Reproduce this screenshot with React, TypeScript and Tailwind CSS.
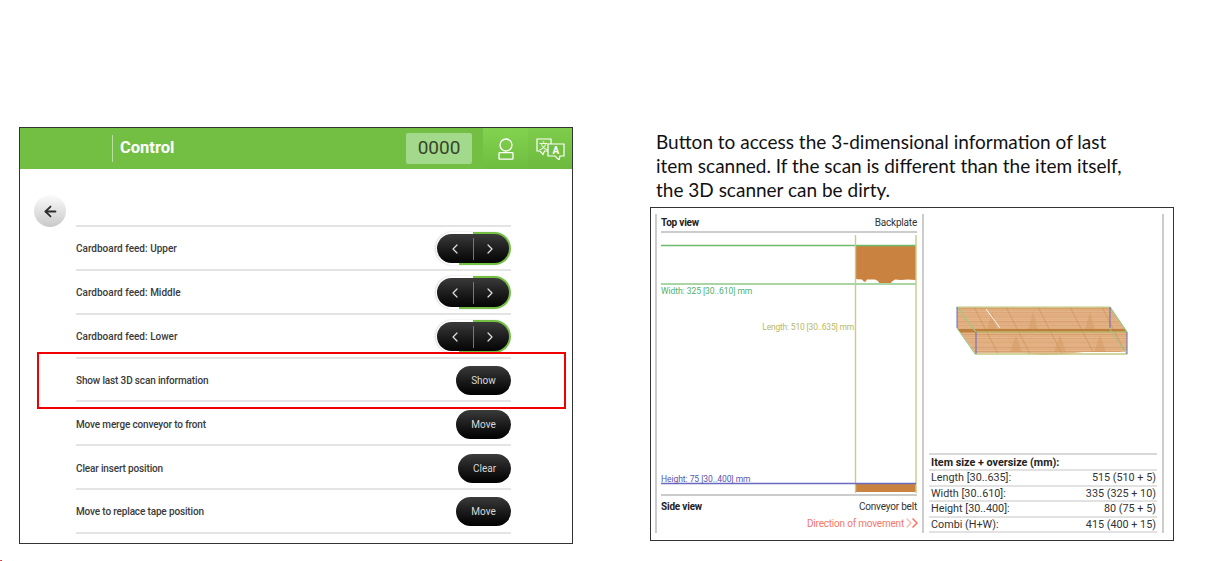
import { ArrowLeft, ChevronLeft, ChevronRight } from "lucide-react";

const actionRows = [
  { label: "Show last 3D scan information", action: "Show", width: "w-[55px]" },
  { label: "Move merge conveyor to front", action: "Move", width: "w-[55px]" },
  { label: "Clear insert position", action: "Clear", width: "w-[53px]" },
  { label: "Move to replace tape position", action: "Move", width: "w-[55px]" },
];

const sizeRows = [
  { label: "Length [30..635]:", value: "515 (510 + 5)" },
  { label: "Width [30..610]:", value: "335 (325 + 10)" },
  { label: "Height [30..400]:", value: "80 (75 + 5)" },
  { label: "Combi (H+W):", value: "415 (400 + 15)" },
];

const Stepper = () => {
  return (
    <div className="relative h-[33px] w-[75px] rounded-full shadow-[-1px_0_2px_#d8d8d8]">
      <div className="absolute inset-0 overflow-hidden rounded-full">
        <div className="absolute right-0 top-0 h-1/2 w-[38px] bg-[#72bf44]" />
        <div className="absolute bottom-0 right-0 h-1/2 w-[52px] bg-[#72bf44]" />
      </div>
      <div className="absolute left-[1px] top-[2px] flex h-[29px] w-[72px] items-center rounded-full bg-gradient-to-b from-[#3b3b3b] to-[#050505] text-[#e0e0e0]">
        <div className="flex h-full w-[36px] items-center justify-center">
          <ChevronLeft size={16} strokeWidth={1.8} />
        </div>
        <div className="h-[22px] w-px bg-[#777777]" />
        <div className="flex h-full flex-1 items-center justify-center pr-[4px]">
          <ChevronRight size={16} strokeWidth={1.8} />
        </div>
      </div>
    </div>
  );
};

const ActionButton = ({ text, width }: { text: string; width: string }) => {
  return (
    <div
      className={`flex h-[29px] items-center justify-center rounded-full bg-gradient-to-b from-[#3b3b3b] to-[#030303] text-[10px] font-normal text-[#d8d8d8] ${width}`}
    >
      {text}
    </div>
  );
};

const Row = ({ label, tight, children }: { label: string; tight?: boolean; children: React.ReactNode }) => {
  return (
    <div className="flex h-[43.85px] items-center justify-between border-b-2 border-[#e4e4e4] pt-[2px]">
      <span className={`text-[10px] font-medium text-[#3a3a3a] ${tight ? "tracking-[-0.15px]" : ""}`}>{label}</span>
      {children}
    </div>
  );
};

const UserIcon = () => (
  <svg width="16" height="22" viewBox="0 0 16 22" fill="none" stroke="#ffffff" strokeWidth="1.3">
    <circle cx="8" cy="7" r="6" />
    <rect x="1" y="14.6" width="14" height="6.6" rx="0.8" />
  </svg>
);

const TranslateIcon = () => (
  <svg width="30" height="22" viewBox="0 0 30 22" fill="none" stroke="#ffffff" strokeWidth="1.2">
    <path d="M2 1h14v12H9.5L8 16.5 5 13H2z" />
    <path d="M13 6h16v12h-4l-1 4-4-4h-7z" fill="#72bf44" />
    <text x="4" y="10.5" fontSize="9" fill="#ffffff" stroke="none" fontFamily="Noto Sans CJK SC, sans-serif">
      文
    </text>
    <text x="17.5" y="16" fontSize="10" fontWeight="700" fill="#ffffff" stroke="none" fontFamily="Roboto, sans-serif">
      A
    </text>
  </svg>
);

const ControlPanel = () => {
  return (
    <div className="flex h-[417px] w-[554px] shrink-0 flex-col border border-[#333333] bg-white">
      <div className="flex h-[41px] shrink-0 items-center bg-[#72bf44]">
        <div className="ml-[92px] h-[27px] w-px bg-[#b8e0a0]" />
        <span className="ml-[7px] text-[16.5px] font-bold text-white">Control</span>
        <div className="ml-auto flex h-full items-center">
          <div className="mr-[11px] flex h-[31px] w-[66px] items-center justify-center rounded-[2px] bg-[#a3d98b] text-[19px] font-normal text-[#37452c]">
            0000
          </div>
          <div className="flex h-full w-[45px] items-center justify-center bg-gradient-to-b from-[#83d24f] to-[#6fbd40]">
            <UserIcon />
          </div>
          <div className="flex h-full w-[44px] items-center justify-center bg-gradient-to-b from-[#7fcd4b] to-[#6cb93e]">
            <TranslateIcon />
          </div>
        </div>
      </div>
      <div className="flex flex-1 items-start pl-[14px]">
        <div className="mt-[26px] flex h-[32px] w-[32px] shrink-0 items-center justify-center rounded-full bg-gradient-to-b from-[#fbfbfb] to-[#c9c9c9] text-[#2c2c2c]">
          <ArrowLeft size={17} strokeWidth={2.5} />
        </div>
        <div className="ml-[10px] mt-[56px] w-[435px] border-t-2 border-[#e4e4e4]">
          <Row label="Cardboard feed: Upper">
            <Stepper />
          </Row>
          <Row label="Cardboard feed: Middle">
            <Stepper />
          </Row>
          <Row label="Cardboard feed: Lower">
            <Stepper />
          </Row>
          {actionRows.map((r) => (
            <Row key={r.label} label={r.label} tight>
              <ActionButton text={r.action} width={r.width} />
            </Row>
          ))}
        </div>
      </div>
    </div>
  );
};

const ScanDiagram = () => {
  return (
    <div className="relative h-[263px] border-b-2 border-[#cccccc]">
      <svg width="256" height="261" viewBox="0 0 256 261" fill="none" className="block">
        <path
          d="M194 12H255V47L247 46.5L240 47L234 46.5L231 48.5L229.5 50.5H218.5L217 48L214 46.5L206 46.5L204.5 48.7L203 48.7L201 46.5L194 46Z"
          fill="#c9823f"
        />
        <rect x="194" y="251" width="61" height="8" fill="#c9823f" />
        <line x1="0" y1="12.5" x2="255" y2="12.5" stroke="#6dba6d" strokeWidth="1.5" />
        <line x1="0" y1="51" x2="255" y2="51" stroke="#a9d6a4" strokeWidth="2" />
        <line x1="194.5" y1="2" x2="194.5" y2="260" stroke="#c8cc84" strokeWidth="1.4" />
        <line x1="255" y1="2" x2="255" y2="260" stroke="#c8cc84" strokeWidth="1.4" />
        <line x1="0" y1="250.5" x2="255" y2="250.5" stroke="#6a6ac0" strokeWidth="1.5" />
      </svg>
      <span className="absolute left-0 top-[52px] text-[8.5px] leading-[12px] tracking-[-0.05px] text-[#4cb070]">Width: 325 [30..610] mm</span>
      <span className="absolute right-[63px] top-[88px] text-[8.5px] leading-[12px] text-[#b9b95f]">Length: 510 [30..635] mm</span>
      <span className="absolute left-0 top-[240px] text-[8.5px] leading-[12px] tracking-[-0.05px] text-[#5656b0]">Height: 75 [30..400] mm</span>
    </div>
  );
};

const Box3D = () => {
  const stripes = Array.from({ length: 22 }, (_, i) => 6 + i * 2.15);
  const diagonals = [50, 82, 114, 146, 178];
  const cones = [68, 92, 109, 136, 166, 176];
  return (
    <svg width="239" height="64" viewBox="0 0 239 64" fill="none" className="mt-[88px] block">
      <defs>
        <clipPath id="scan-body">
          <path d="M33 5H186L203 30V49L196 50L160 50L140 52L120 53L100 51L51 51L33 26Z" />
        </clipPath>
      </defs>
      <g clipPath="url(#scan-body)">
        <rect x="30" y="3" width="176" height="52" fill="#e6b88f" />
        {stripes.map((y, i) => (
          <rect key={y} x="30" y={y} width="176" height={i % 3 === 0 ? 1.5 : 1} fill="#d59a63" opacity={i % 2 === 0 ? 0.75 : 0.45} />
        ))}
        {diagonals.map((x) => (
          <line key={x} x1={x} y1="5" x2={x + 24} y2="52" stroke="#c98647" opacity="0.5" />
        ))}
        {cones.map((x, i) => (
          <path
            key={x}
            d={i % 2 === 0 ? `M${x - 5} 28L${x} 10L${x + 5} 28Z` : `M${x - 6} 50L${x} 33L${x + 6} 50Z`}
            fill="#d39660"
            opacity="0.45"
          />
        ))}
        <rect x="30" y="27" width="176" height="3.5" fill="#b97630" opacity="0.85" />
      </g>
      <path d="M62 7L76 26" stroke="#ffffff" strokeWidth="1" opacity="0.85" />
      <path d="M33 5H186L203 30H52Z" stroke="#b9cf7f" />
      <path d="M51 52H203" stroke="#c4c77e" strokeWidth="1.5" />
      <path d="M33 5L52 30M186 5L203 30M33 26L51 52M185 26L203 52" stroke="#8fc98a" />
      <path d="M33 5V26M186 5V26M52 30V52M203 30V52" stroke="#6666bb" />
    </svg>
  );
};

const ScanFigure = () => {
  return (
    <div className="mt-[5px] flex h-[334px] w-[524px] border border-[#333333] bg-white pb-[7px] pl-[4px] pt-[6px] text-[10px] tracking-[-0.2px] text-[#333333]">
      <div className="flex w-[267px] shrink-0 flex-col border-l-2 border-[#cccccc] pl-[4px] pr-[5px]">
        <div className="flex h-[19px] items-center justify-between border-b-2 border-[#cccccc]">
          <span className="font-bold text-[#222222]">Top view</span>
          <span>Backplate</span>
        </div>
        <ScanDiagram />
        <div className="flex h-[20px] items-center justify-between">
          <span className="font-bold text-[#222222]">Side view</span>
          <span>Conveyor belt</span>
        </div>
        <div className="flex h-[14px] items-center justify-end text-[#f6776a]">
          Direction of movement
          <ChevronRight size={16} strokeWidth={2} className="-ml-[3px] text-[#f9b8ac]" />
          <ChevronRight size={16} strokeWidth={2.5} className="-ml-[10px] -mr-[6px]" />
        </div>
      </div>
      <div className="flex w-[242px] shrink-0 flex-col border-x-2 border-[#cccccc]">
        <Box3D />
        <div className="mx-[5px] mt-auto border-t-2 border-[#d8d8d8] text-[10.8px] leading-[14px] tracking-normal text-[#333333]">
          <div className="flex h-[16px] items-center border-b-2 border-[#e2e2e2] pl-[2px] pr-[1px] pt-[1px] font-bold text-[#222222]">
            Item size + oversize (mm):
          </div>
          {sizeRows.map((r) => (
            <div key={r.label} className="flex h-[15.5px] items-center justify-between border-b-2 border-[#e2e2e2] pl-[2px] pr-[1px] pt-[1px]">
              <span>{r.label}</span>
              <span>{r.value}</span>
            </div>
          ))}
        </div>
      </div>
    </div>
  );
};

export default function App() {
  return (
    <div className="relative flex h-[561px] w-[1205px] items-start overflow-hidden bg-white pl-[19px] pt-[127px] font-[family-name:Roboto]">
      <ControlPanel />
      <div className="ml-[77px] pt-[3px]">
        <p className="pl-[6px] font-[family-name:Lato] text-[19px] leading-[24px] text-[#111111]">
          Button to access the 3-dimensional information of last
          <br />
          item scanned. If the scan is different than the item itself,
          <br />
          the 3D scanner can be dirty.
        </p>
        <ScanFigure />
      </div>
      {/* highlight drawn over the row */}
      <div className="absolute left-[37px] top-[352px] h-[57px] w-[529px] border-2 border-[#f00000]" />
      <div className="absolute bottom-0 left-0 flex h-px">
        <div className="w-px bg-[#e05050]" />
        <div className="w-px bg-[#5060d0]" />
      </div>
    </div>
  );
}
